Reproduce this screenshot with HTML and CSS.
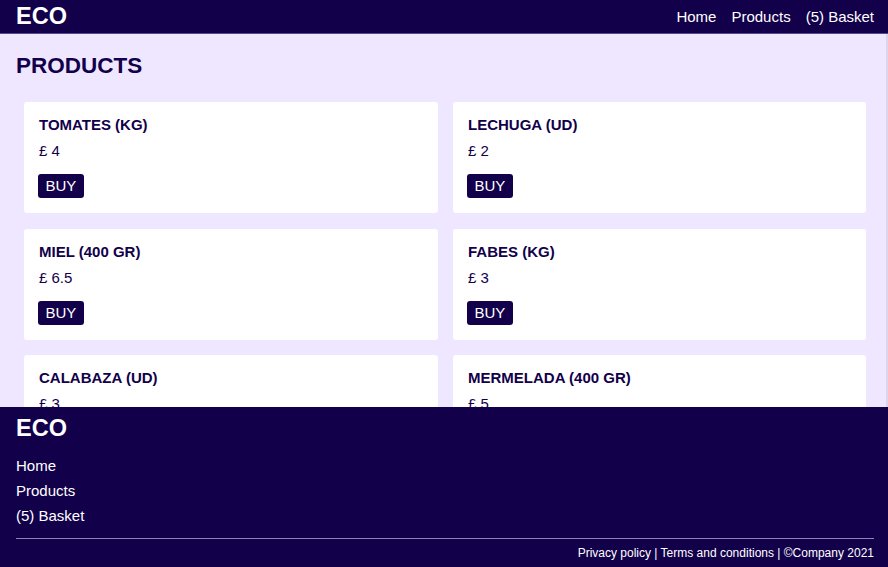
FILE: index.html
```html
<!DOCTYPE html>
<html lang="en">
<head>
<meta charset="utf-8">
<title>ECO - Products</title>
<link rel="stylesheet" href="styles.css">
</head>
<body>
<header class="topbar">
  <div class="logo">ECO</div>
  <nav class="topnav">
    <a href="#">Home</a>
    <a href="#">Products</a>
    <a href="#">(5) Basket</a>
  </nav>
</header>
<main class="main">
  <h1 class="page-title">PRODUCTS</h1>
  <div class="grid">
    <div class="card"><h2 class="card-title">TOMATES (KG)</h2><p class="price">£ 4</p><button class="buy">BUY</button></div>
    <div class="card"><h2 class="card-title">LECHUGA (UD)</h2><p class="price">£ 2</p><button class="buy">BUY</button></div>
    <div class="card"><h2 class="card-title">MIEL (400 GR)</h2><p class="price">£ 6.5</p><button class="buy">BUY</button></div>
    <div class="card"><h2 class="card-title">FABES (KG)</h2><p class="price">£ 3</p><button class="buy">BUY</button></div>
    <div class="card"><h2 class="card-title">CALABAZA (UD)</h2><p class="price">£ 3</p><button class="buy">BUY</button></div>
    <div class="card"><h2 class="card-title">MERMELADA (400 GR)</h2><p class="price">£ 5</p><button class="buy">BUY</button></div>
  </div>
</main>
<footer class="footer">
  <div class="logo">ECO</div>
  <ul class="footnav">
    <li><a href="#">Home</a></li>
    <li><a href="#">Products</a></li>
    <li><a href="#">(5) Basket</a></li>
  </ul>
  <div class="legal">Privacy policy | Terms and conditions | ©Company 2021</div>
</footer>
</body>
</html>
```
FILE: styles.css
```css
* { box-sizing: border-box; }
html, body { margin: 0; padding: 0; }
body {
  font-family: "Liberation Sans", Arial, sans-serif;
  background: #efe7ff;
  color: #12004a;
  height: 567px;
  overflow: hidden;
}
a { color: #ffffff; text-decoration: none; }
.topbar {
  background: #12004a;
  height: 34px;
  border-bottom: 1px solid #54478a;
  display: flex;
  align-items: center;
  justify-content: space-between;
  padding: 0 14px 0 16px;
}
.logo {
  color: #ffffff;
  font-weight: bold;
  font-size: 23.5px;
  line-height: 27px;
}
.topnav { display: flex; gap: 15px; font-size: 15px; }
.main {
  padding: 19px 22px 0 0;
  border-right: 2px solid #ddd5ec;
  height: 533px;
}
.page-title {
  margin: 0 0 23px 16px;
  font-size: 22.5px;
  line-height: 26px;
  font-weight: bold;
}
.grid {
  display: grid;
  grid-template-columns: 414px 413px;
  column-gap: 15px;
  row-gap: 15.5px;
  padding-left: 24px;
}
.card {
  background: #ffffff;
  border-radius: 3px;
  padding: 14px 15px 15px;
}
.card-title {
  margin: 0 0 9px;
  font-size: 15px;
  line-height: 17px;
  font-weight: bold;
}
.price {
  margin: 0 0 15px;
  font-size: 15px;
  line-height: 17px;
}
.buy {
  display: block;
  background: #12004a;
  color: #ffffff;
  border: none;
  border-radius: 3px;
  font-family: inherit;
  font-size: 15px;
  line-height: 18px;
  padding: 3px 7.5px;
  margin-left: -1px;
}
.footer {
  position: fixed;
  left: 0;
  right: 0;
  bottom: 0;
  height: 160px;
  background: #12004a;
  color: #ffffff;
  padding: 8px 14px 0 16px;
}
.footnav {
  list-style: none;
  margin: 11px 0 0;
  padding: 0 0 10px;
  font-size: 15px;
  line-height: 25px;
  border-bottom: 1px solid #8c80b4;
}
.legal {
  text-align: right;
  font-size: 12px;
  line-height: 14px;
  margin-top: 7px;
}
```
